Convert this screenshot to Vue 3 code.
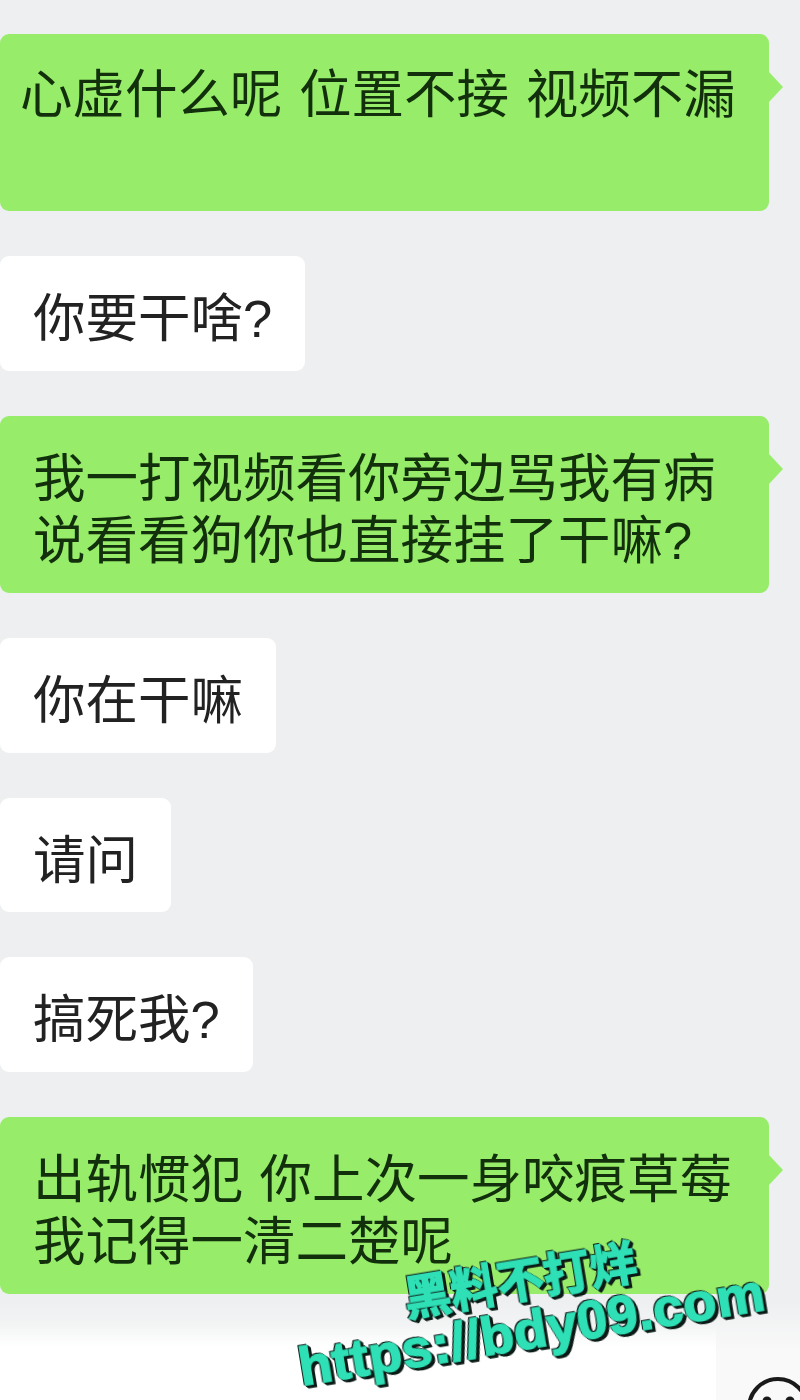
<script setup>
const messages = [
  { id: 1, mine: true, flush: true, height: 177, lines: ['心虚什么呢 位置不接 视频不漏'] },
  { id: 2, mine: false, height: 115, lines: ['你要干啥?'] },
  { id: 3, mine: true, height: 177, lines: ['我一打视频看你旁边骂我有病', '说看看狗你也直接挂了干嘛?'] },
  { id: 4, mine: false, height: 115, lines: ['你在干嘛'] },
  { id: 5, mine: false, height: 114, lines: ['请问'] },
  { id: 6, mine: false, height: 115, lines: ['搞死我?'] },
  { id: 7, mine: true, height: 177, lines: ['出轨惯犯 你上次一身咬痕草莓', '我记得一清二楚呢'] },
]
</script>

<template>
  <div class="chat">
    <div class="chat__list">
      <div
        v-for="msg in messages"
        :key="msg.id"
        :class="['bubble', msg.mine ? 'bubble--mine' : 'bubble--other', { 'bubble--flush': msg.flush }]"
        :style="{ height: msg.height + 'px' }"
      >
        <p class="bubble__text">
          <template v-for="(line, i) in msg.lines" :key="line"><br v-if="i > 0" />{{ line }}</template>
        </p>
      </div>
    </div>

    <div class="chat__input">
      <div class="chat__field"></div>
      <svg class="chat__emoji" width="64" height="64" viewBox="0 0 64 64" fill="none">
        <circle cx="32" cy="32" r="29" stroke="#1a1a1a" stroke-width="4" />
        <circle cx="21" cy="25" r="4.5" fill="#1a1a1a" />
        <circle cx="44" cy="25" r="4.5" fill="#1a1a1a" />
      </svg>
    </div>

    <div class="watermark">
      <div class="watermark__title">黑料不打烊</div>
      <div class="watermark__url">https://bdy09.com</div>
    </div>
  </div>
</template>

<style>
html,
body {
  margin: 0;
  background: #edeff0;
}
</style>

<style scoped>
.chat {
  position: relative;
  width: 800px;
  height: 1400px;
  overflow: hidden;
  background: #edeff0;
  font-family: "Liberation Sans", "Noto Sans CJK SC", sans-serif;
  color: #222;
}

.chat__list {
  display: flex;
  flex-direction: column;
  align-items: flex-start;
  gap: 45px;
  padding-top: 34px;
}

.bubble {
  position: relative;
  box-sizing: border-box;
  padding: 32px 33px 0;
  border-radius: 9px;
}

.bubble__text {
  margin: 0;
  font-size: 52.5px;
  line-height: 62px;
  word-spacing: 2px;
  white-space: nowrap;
}

.bubble--mine {
  width: 769px;
  background: #97ed69;
  color: #12300c;
}

.bubble--flush {
  padding-left: 20px;
  padding-top: 30px;
}

.bubble--mine::after {
  content: "";
  position: absolute;
  top: 38px;
  right: -14px;
  border-top: 15px solid transparent;
  border-bottom: 15px solid transparent;
  border-left: 14px solid #97ed69;
}

.bubble--other {
  background: #fff;
}

.chat__input {
  position: absolute;
  left: 0;
  right: 0;
  bottom: 0;
  height: 100px;
  background: linear-gradient(#edeff0, #f9f9f9 52px);
}

.chat__field {
  position: absolute;
  left: 0;
  top: 26px;
  bottom: 0;
  width: 716px;
  background: linear-gradient(rgba(255, 255, 255, 0), #fff 22px);
}

.chat__emoji {
  position: absolute;
  left: 746px;
  top: 76px;
}

.watermark {
  position: absolute;
  left: 287px;
  top: 1295px;
  transform: rotate(-9.3deg);
  transform-origin: left top;
  color: #2fe0b6;
  font-weight: 700;
  -webkit-text-stroke: 1.5px #2fe0b6;
  filter: drop-shadow(1px 1px 0 #0c1a16) drop-shadow(-1px -1px 0 #0c1a16) drop-shadow(2px 2px 0 #0c1a16);
  white-space: nowrap;
}

.watermark__title {
  margin-left: 115px;
  font-size: 47px;
  line-height: 48px;
}

.watermark__url {
  font-size: 54.5px;
  line-height: 52px;
  letter-spacing: 0.3px;
}
</style>
